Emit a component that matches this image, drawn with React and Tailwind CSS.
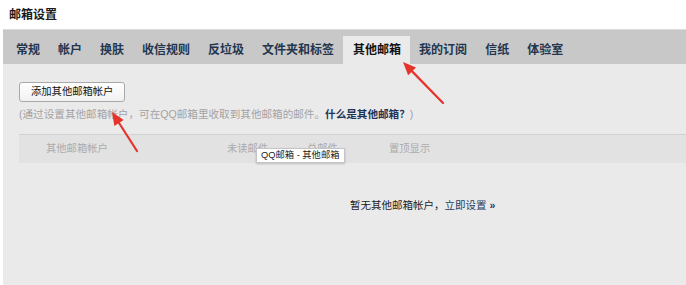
import React from "react";

const tabs = ["常规", "帐户", "换肤", "收信规则", "反垃圾", "文件夹和标签", "其他邮箱", "我的订阅", "信纸", "体验室"];

function Arrow({ x1, y1, x2, y2 }) {
  const dx = x2 - x1, dy = y2 - y1;
  const len = Math.sqrt(dx * dx + dy * dy);
  const ux = dx / len, uy = dy / len;
  const hl = 13, hw = 5.5;
  const bx = x2 - ux * hl, by = y2 - uy * hl;
  const px = -uy, py = ux;
  const pts = `${x2},${y2} ${bx + px * hw},${by + py * hw} ${bx - px * hw},${by - py * hw}`;
  return (
    <g>
      <line x1={x1} y1={y1} x2={bx + ux * 2} y2={by + uy * 2} stroke="#e5342b" strokeWidth="2.2" strokeLinecap="round" />
      <polygon points={pts} fill="#e5342b" />
    </g>
  );
}

export default function App() {
  return (
    <div
      className="relative w-[686px] h-[285px] bg-white overflow-hidden flex flex-col"
      style={{ fontFamily: '"Helvetica Neue", "Liberation Sans", "Noto Sans CJK SC", sans-serif' }}
    >
      <div className="h-[29px] pl-[9px] pt-[7px] text-[12px] leading-[16px] font-bold text-[#1a1a1a]">邮箱设置</div>
      <div className="ml-[3px] h-[35px] bg-[#c8c8c8] border-t border-[#dcdcdc] flex items-end pl-[4px]">
        {tabs.map((t, i) => (
          <div
            key={t}
            className={
              i === 6
                ? "h-[28px] flex items-center pl-[10px] pr-[9px] bg-[#ebeaeb] text-[12px] font-bold text-[#111]"
                : "h-[28px] flex items-center px-[9px] text-[12px] font-bold text-[#24364f]"
            }
          >
            {t}
          </div>
        ))}
      </div>
      <div className="ml-[3px] flex-1 bg-[#ebeaeb] pl-[16px] pt-[18px] flex flex-col">
        <div className="w-[106px] h-[20px] border border-[#a9a9a9] rounded-[3px] bg-gradient-to-b from-[#ffffff] to-[#f1f1f1] pl-[11px] flex items-center text-[10.3px] text-[#111] leading-none">
          添加其他邮箱帐户
        </div>
        <div className="mt-[6px] h-[12px] flex items-center text-[10.6px] leading-none text-[#a3a3a3] whitespace-nowrap">
          (通过设置其他邮箱帐户，可在QQ邮箱里收取到其他邮箱的邮件。
          <span className="text-[#1d3557] font-bold">什么是其他邮箱？</span>)
        </div>
        <div className="mt-[14px] h-[29px] bg-[#e3e2e3] border-t border-[#d2d2d2] flex items-center text-[10.3px] text-[#ababab] leading-none whitespace-nowrap">
          <div className="w-[208px] pl-[27px]">其他邮箱帐户</div>
          <div className="w-[80px]">未读邮件</div>
          <div className="w-[82px]">总邮件</div>
          <div>置顶显示</div>
        </div>
        <div className="mt-[37px] pl-[331px] text-[10.5px] leading-none text-[#1c1c1c] whitespace-nowrap">
          暂无其他邮箱帐户，<span className="text-[#1d3a60]">立即设置 <b>»</b></span>
        </div>
      </div>

      <div className="absolute left-[256px] top-[148px] h-[15px] px-[4px] bg-white border border-[#c4c4c4] shadow-[0_1px_2px_rgba(0,0,0,0.2)] flex items-center text-[9.3px] leading-none text-[#222] whitespace-nowrap">
        QQ邮箱 - 其他邮箱
      </div>

      <svg className="absolute left-0 top-0 pointer-events-none" width="686" height="285">
        <Arrow x1={443} y1={103} x2={403} y2={62} />
        <Arrow x1={137} y1={151} x2={112} y2={112} />
      </svg>
    </div>
  );
}
